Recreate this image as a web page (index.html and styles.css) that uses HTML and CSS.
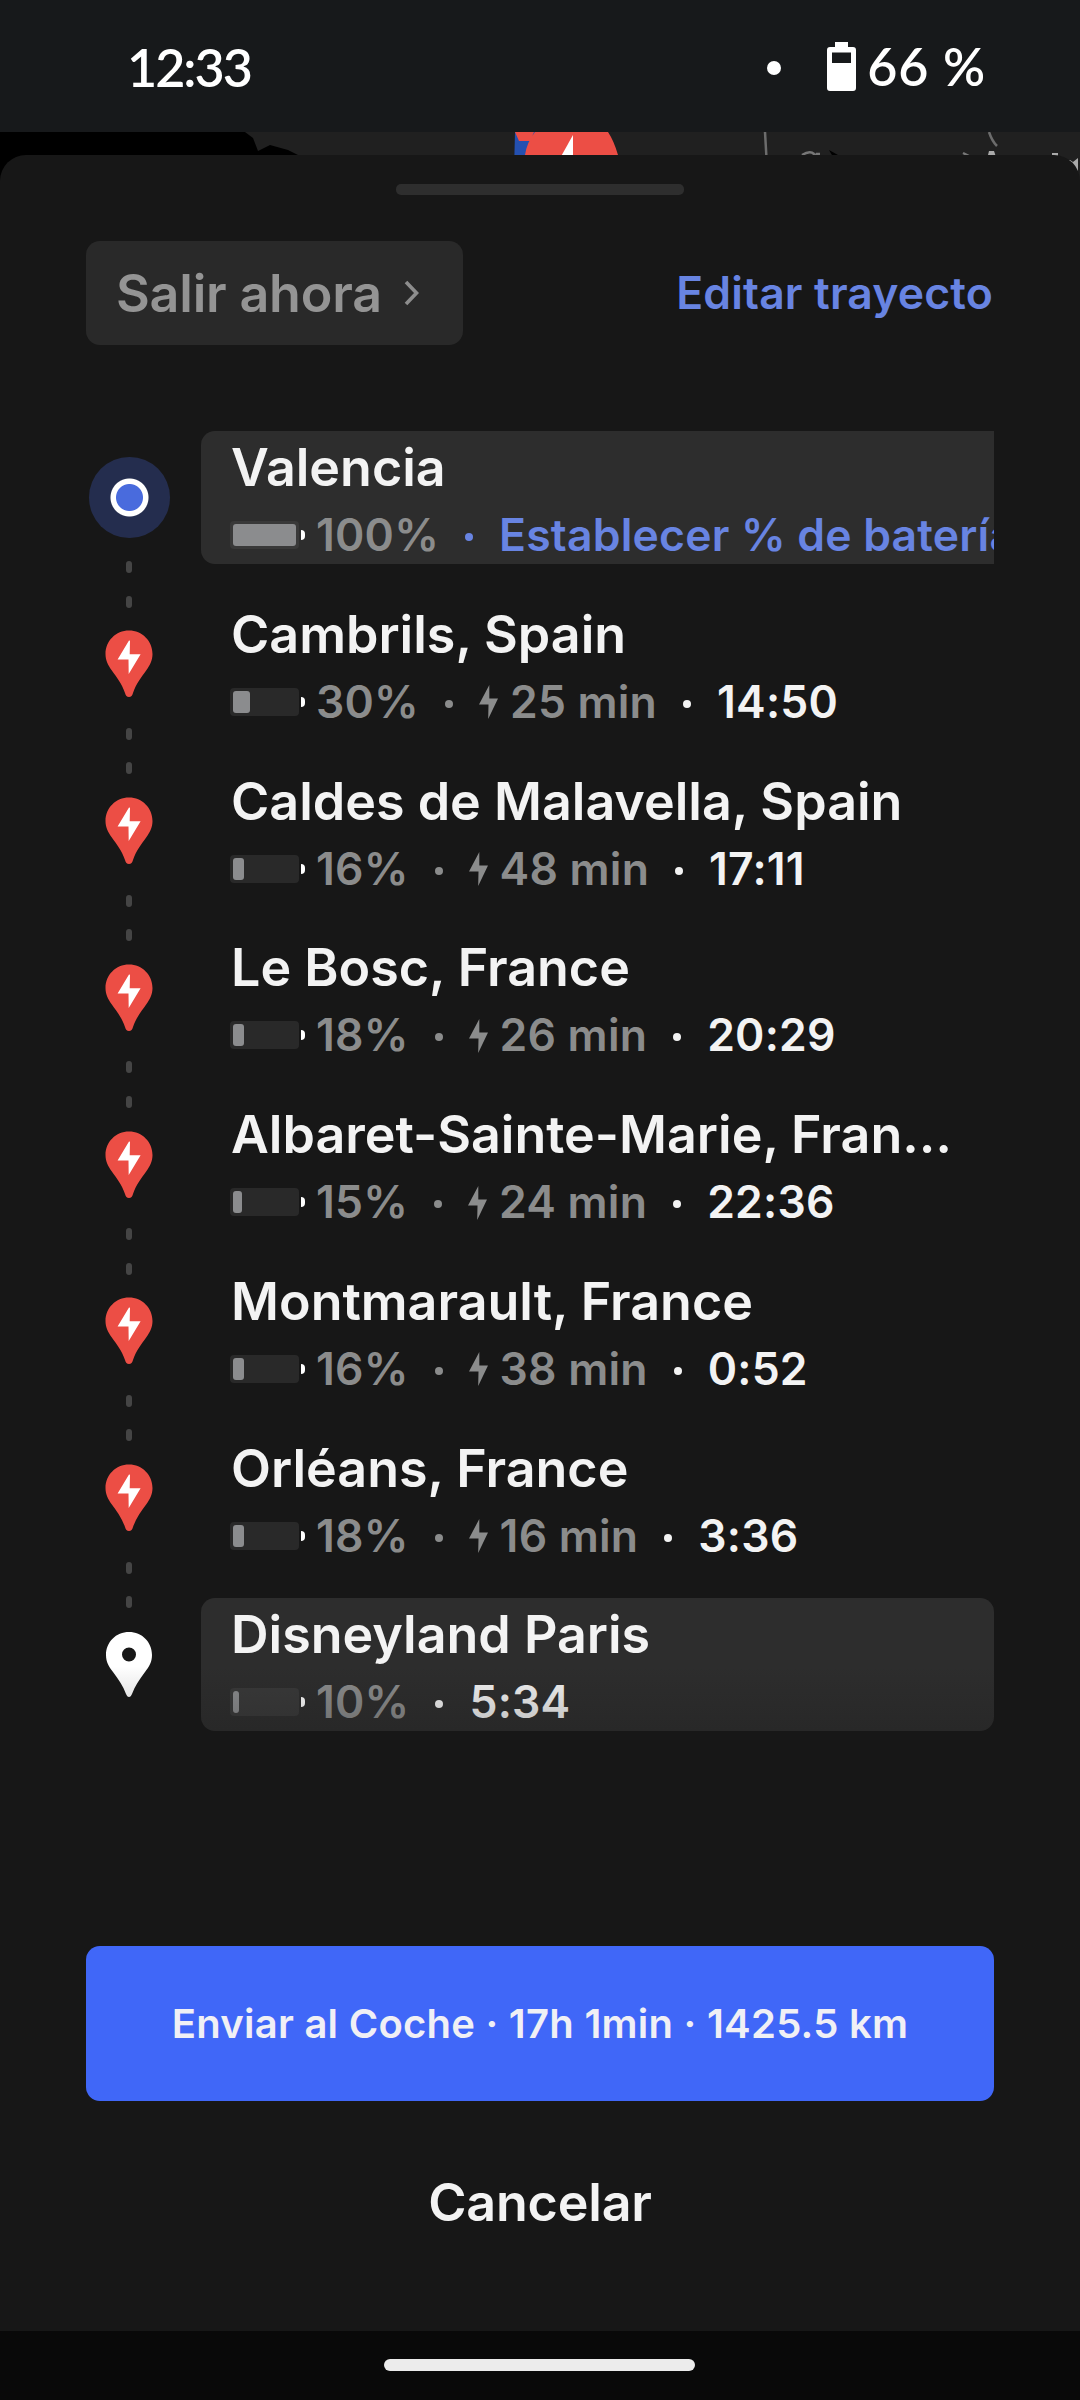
FILE: index.html
```html
<!DOCTYPE html>
<html lang="es">
<head>
<meta charset="utf-8">
<title>Trayecto</title>
<link rel="stylesheet" href="styles.css">
</head>
<body>
<svg class="defs" width="0" height="0" aria-hidden="true">
  <symbol id="pin" viewBox="0 0 48 67">
    <path fill="#ec4e45" d="M24 .5C10.800.5.5 11 .5 24c0 6.500 2.500 11 6 16 5 7 10.500 14 13.500 23 .7 2.500 1.800 4 4 4s3.300-1.500 4-4c3-9 8.500-16 13.500-23 3.500-5 6-9.500 6-16C47.500 11 37.200.5 24 .5z"/>
    <path fill="#fff" d="M24 10.500 12.600 29.500h10.900L23.700 44 35.600 24.300H24.700L25 10.800z"/>
  </symbol>
  <symbol id="bolt" viewBox="0 0 19 34">
    <path fill="currentColor" d="M10.300 0 0 19.500h9.500L9.200 34 19 13.500h-8.700z"/>
  </symbol>
</svg>
<header class="status">
  <span class="clock">12:33</span>
  <span class="status-right">
    <i class="status-dot"></i>
    <svg width="29" height="49" viewBox="0 0 29 49"><path fill="#fff" fill-rule="evenodd" d="M8 0h13v5h5q3 0 3 3v38q0 3-3 3H3q-3 0-3-3V8q0-3 3-3h5zM5 10.500V21h19V10.500z"/></svg>
    <span class="level">66 %</span>
  </span>
</header>
<svg class="map" width="1080" height="70" viewBox="0 132 1080 70">
  <path fill="#202020" d="M245 132h835v70H320l-22-47-10-5-18-5-12 6-5-13z"/>
  <path fill="#2450b0" d="M515 132h20v40h-21z"/>
  <path fill="#ec4e45" d="M515 132h19l-4 9h-11zM535 132h73q6 9 10 23v14h-93v-14q2-13 10-23z"/>
  <path fill="#fff" d="M573 135v34h-19z"/>
  <path fill="none" stroke="#6c6c6c" stroke-width="2.500" d="M765 132l2 35M989 132q3 9 8 14"/>
  <path fill="none" stroke="#777" stroke-width="2.500" d="M802 155q8-5 12-1l4 2M816 154h4M963 153l6 3"/>
  <path d="M829 150l9 5 5 8-10-6z"/>
  <path fill="#aaa" d="M989 151h5l4 12h-12zM1052 153h6v8h-6zM1065 160h5l3 2 5-4v14z"/>
</svg>
<main class="sheet">
  <div class="handle"></div>
  <div class="top">
    <button class="leave"><span class="leave-text">Salir ahora</span><svg width="15" height="26" viewBox="0 0 15 26"><path d="M2 2l10.500 11L2 24" fill="none" stroke="#8d8d8d" stroke-width="3.600"/></svg></button>
    <a class="edit">Editar trayecto</a>
  </div>
  <ol class="stops">
    <li class="stop origin">
      <div class="rail"><span class="marker"><i class="here"></i></span><i class="dash"></i><i class="dash"></i></div>
      <div class="card filled"><h2>Valencia</h2>
        <p><span class="battery"><i style="width:100%"></i></span><span class="pct">100%</span><b class="sep blue"></b><span class="set">Establecer % de batería</span></p></div>
    </li>
    <li class="stop">
      <div class="rail"><span class="marker"><svg width="48" height="67"><use href="#pin"/></svg></span><i class="dash"></i><i class="dash"></i></div>
      <div class="card"><h2>Cambrils, Spain</h2>
        <p><span class="battery"><i style="width:27%"></i></span><span class="pct">30%</span><b class="sep"></b><svg class="bolt" width="19" height="34"><use href="#bolt"/></svg><span class="mins">25 min</span><b class="sep light"></b><time>14:50</time></p></div>
    </li>
    <li class="stop">
      <div class="rail"><span class="marker"><svg width="48" height="67"><use href="#pin"/></svg></span><i class="dash"></i><i class="dash"></i></div>
      <div class="card"><h2>Caldes de Malavella, Spain</h2>
        <p><span class="battery"><i style="width:18%"></i></span><span class="pct">16%</span><b class="sep"></b><svg class="bolt" width="19" height="34"><use href="#bolt"/></svg><span class="mins">48 min</span><b class="sep light"></b><time>17:11</time></p></div>
    </li>
    <li class="stop">
      <div class="rail"><span class="marker"><svg width="48" height="67"><use href="#pin"/></svg></span><i class="dash"></i><i class="dash"></i></div>
      <div class="card"><h2>Le Bosc, France</h2>
        <p><span class="battery"><i style="width:18%"></i></span><span class="pct">18%</span><b class="sep"></b><svg class="bolt" width="19" height="34"><use href="#bolt"/></svg><span class="mins">26 min</span><b class="sep light"></b><time>20:29</time></p></div>
    </li>
    <li class="stop">
      <div class="rail"><span class="marker"><svg width="48" height="67"><use href="#pin"/></svg></span><i class="dash"></i><i class="dash"></i></div>
      <div class="card"><h2>Albaret-Sainte-Marie, Fran<span class="dots">…</span></h2>
        <p><span class="battery"><i style="width:14%"></i></span><span class="pct">15%</span><b class="sep"></b><svg class="bolt" width="19" height="34"><use href="#bolt"/></svg><span class="mins">24 min</span><b class="sep light"></b><time>22:36</time></p></div>
    </li>
    <li class="stop">
      <div class="rail"><span class="marker"><svg width="48" height="67"><use href="#pin"/></svg></span><i class="dash"></i><i class="dash"></i></div>
      <div class="card"><h2>Montmarault, France</h2>
        <p><span class="battery"><i style="width:18%"></i></span><span class="pct">16%</span><b class="sep"></b><svg class="bolt" width="19" height="34"><use href="#bolt"/></svg><span class="mins">38 min</span><b class="sep light"></b><time>0:52</time></p></div>
    </li>
    <li class="stop">
      <div class="rail"><span class="marker"><svg width="48" height="67"><use href="#pin"/></svg></span><i class="dash"></i><i class="dash"></i></div>
      <div class="card"><h2>Orléans, France</h2>
        <p><span class="battery"><i style="width:18%"></i></span><span class="pct">18%</span><b class="sep"></b><svg class="bolt" width="19" height="34"><use href="#bolt"/></svg><span class="mins">16 min</span><b class="sep light"></b><time>3:36</time></p></div>
    </li>
    <li class="stop">
      <div class="rail"><span class="marker"><svg width="46" height="65" viewBox="0 0 46 65"><path fill="#fff" fill-rule="evenodd" d="M23 0C10 0 0 10 0 23c0 7 3 12 7 17 6 8 10 14 13 22 1 2 1.500 3 3 3s2-1 3-3c3-8 7-14 13-22 4-5 7-10 7-17C46 10 36 0 23 0zm0 15.500a7 7 0 1 1 0 14 7 7 0 0 1 0-14z"/></svg></span></div>
      <div class="card filled last"><h2>Disneyland Paris</h2>
        <p><span class="battery"><i style="width:9%"></i></span><span class="pct">10%</span><b class="sep light"></b><time>5:34</time></p></div>
    </li>
  </ol>
  <div class="actions">
    <div class="fade"></div>
    <button class="send">Enviar al Coche · 17h 1min · 1425.5 km</button>
    <button class="cancel">Cancelar</button>
  </div>
</main>
<footer class="nav"><i></i></footer>
</body>
</html>
```

FILE: styles.css
```css
* { box-sizing: border-box; }
body {
  margin: 0;
  width: 1080px;
  height: 2400px;
  overflow: hidden;
  background: #000;
  font-family: Inter, "Liberation Sans", sans-serif;
  font-weight: 600;
  color: #f3f3f3;
  display: flex;
  flex-direction: column;
}
button { border: 0; padding: 0; font: inherit; color: inherit; }
svg { display: block; flex: none; }
.defs { position: absolute; }

.status {
  flex: none;
  height: 132px;
  padding: 0 94px 0 127px;
  display: flex;
  align-items: center;
  justify-content: space-between;
  background: #17191b;
  color: #fff;
  font: 600 52px/60px Lato, sans-serif;
}
.clock { padding-top: 2px; white-space: nowrap; letter-spacing: -2px; }
.status-right { display: flex; align-items: center; }
.status-dot { width: 14px; height: 14px; border-radius: 50%; background: #fff; margin-right: 46px; margin-top: 4px; }
.level { margin-left: 11px; white-space: nowrap; letter-spacing: .8px; }

.map { margin-bottom: -47px; }
.sheet {
  position: relative;
  flex: none;
  height: 2176px;
  padding: 29px 86px 0;
  border-radius: 26px 26px 0 0;
  background: #171717;
}
.handle { width: 288px; height: 11px; margin: 0 auto; border-radius: 5px; background: #2e2e2e; }

.top { display: flex; justify-content: space-between; align-items: center; margin-top: 46px; height: 104px; }
.leave {
  display: flex;
  align-items: center;
  width: 377px;
  height: 104px;
  padding-left: 30px;
  border-radius: 14px;
  background: #292929;
  color: #949494;
  font-size: 52px;
  letter-spacing: -.2px;
}
.leave-text { width: 288px; text-align: left; white-space: nowrap; }
.edit { font-size: 44.5px; color: #6884e2; white-space: nowrap; padding-right: 1px; letter-spacing: .15px; }

.stops { list-style: none; margin: 86px 0 0; padding: 0; }
.stop { display: flex; height: 166.760px; }
.rail { width: 86px; margin-right: 29px; padding-top: 26px; display: flex; flex-direction: column; align-items: center; }
.marker { flex: none; height: 80px; margin-bottom: 24px; display: flex; align-items: center; }
.origin .marker { height: 81px; margin-bottom: 23px; }
.here { width: 81px; height: 81px; border-radius: 50%; background: radial-gradient(circle, #496bdd 13px, #fff 14px, #fff 18.500px, #242d4e 19.500px); }
.dash { flex: none; width: 6px; height: 12px; border-radius: 3px; margin-bottom: 22.500px; background: #454545; }
.card { width: 793px; height: 133px; padding: 5px 0 0 30px; border-radius: 14px; overflow: hidden; }
.filled { background: #2d2d2d; }
.origin .card { border-radius: 14px 0 0 14px; }
h2 { margin: 0; font-size: 52px; line-height: 64px; font-weight: 600; white-space: nowrap; }
.dots { letter-spacing: -2px; }
p { margin: 7px 0 0 -1px; height: 56px; display: flex; align-items: center; font-size: 44.500px; color: #8b8c8c; white-space: nowrap; letter-spacing: .2px; }
.battery { position: relative; flex: none; width: 69px; height: 28px; padding: 3px; margin-right: 17px; border-radius: 4px; background: #292929; }
.filled .battery { background: #393939; }
.battery i { display: block; height: 22px; border-radius: 3px; background: #8b8c8e; }
.battery::after { content: ""; position: absolute; left: 71px; top: 9px; width: 4px; height: 10px; border-radius: 0 4px 4px 0; background: #fff; }
.sep { flex: none; width: 8px; height: 8px; margin: 4px 26px 0 26px; border-radius: 50%; background: currentColor; }
.blue, .set { color: #6884e2; }
.light, time { color: #f3f3f3; }
.bolt { margin: 1px 12px 0 0; }

.actions { position: relative; margin-top: 181px; }
.fade { position: absolute; left: -60px; right: -60px; bottom: 100%; height: 280px; background: linear-gradient(rgba(23,23,23,0), #171717); }
.send, .cancel { display: block; width: 908px; text-align: center; white-space: nowrap; }
.send { height: 155px; border-radius: 14px; background: #4067f8; color: #f0f0f5; font-size: 40px; letter-spacing: .25px; }
.cancel { height: 130px; margin-top: 36px; background: none; font-size: 52px; letter-spacing: -.2px; }

.nav { flex: none; height: 69px; padding-top: 28px; background: #090909; }
.nav i { display: block; width: 311px; height: 12px; margin: 0 0 0 384px; border-radius: 6px; background: #ececec; }
```
